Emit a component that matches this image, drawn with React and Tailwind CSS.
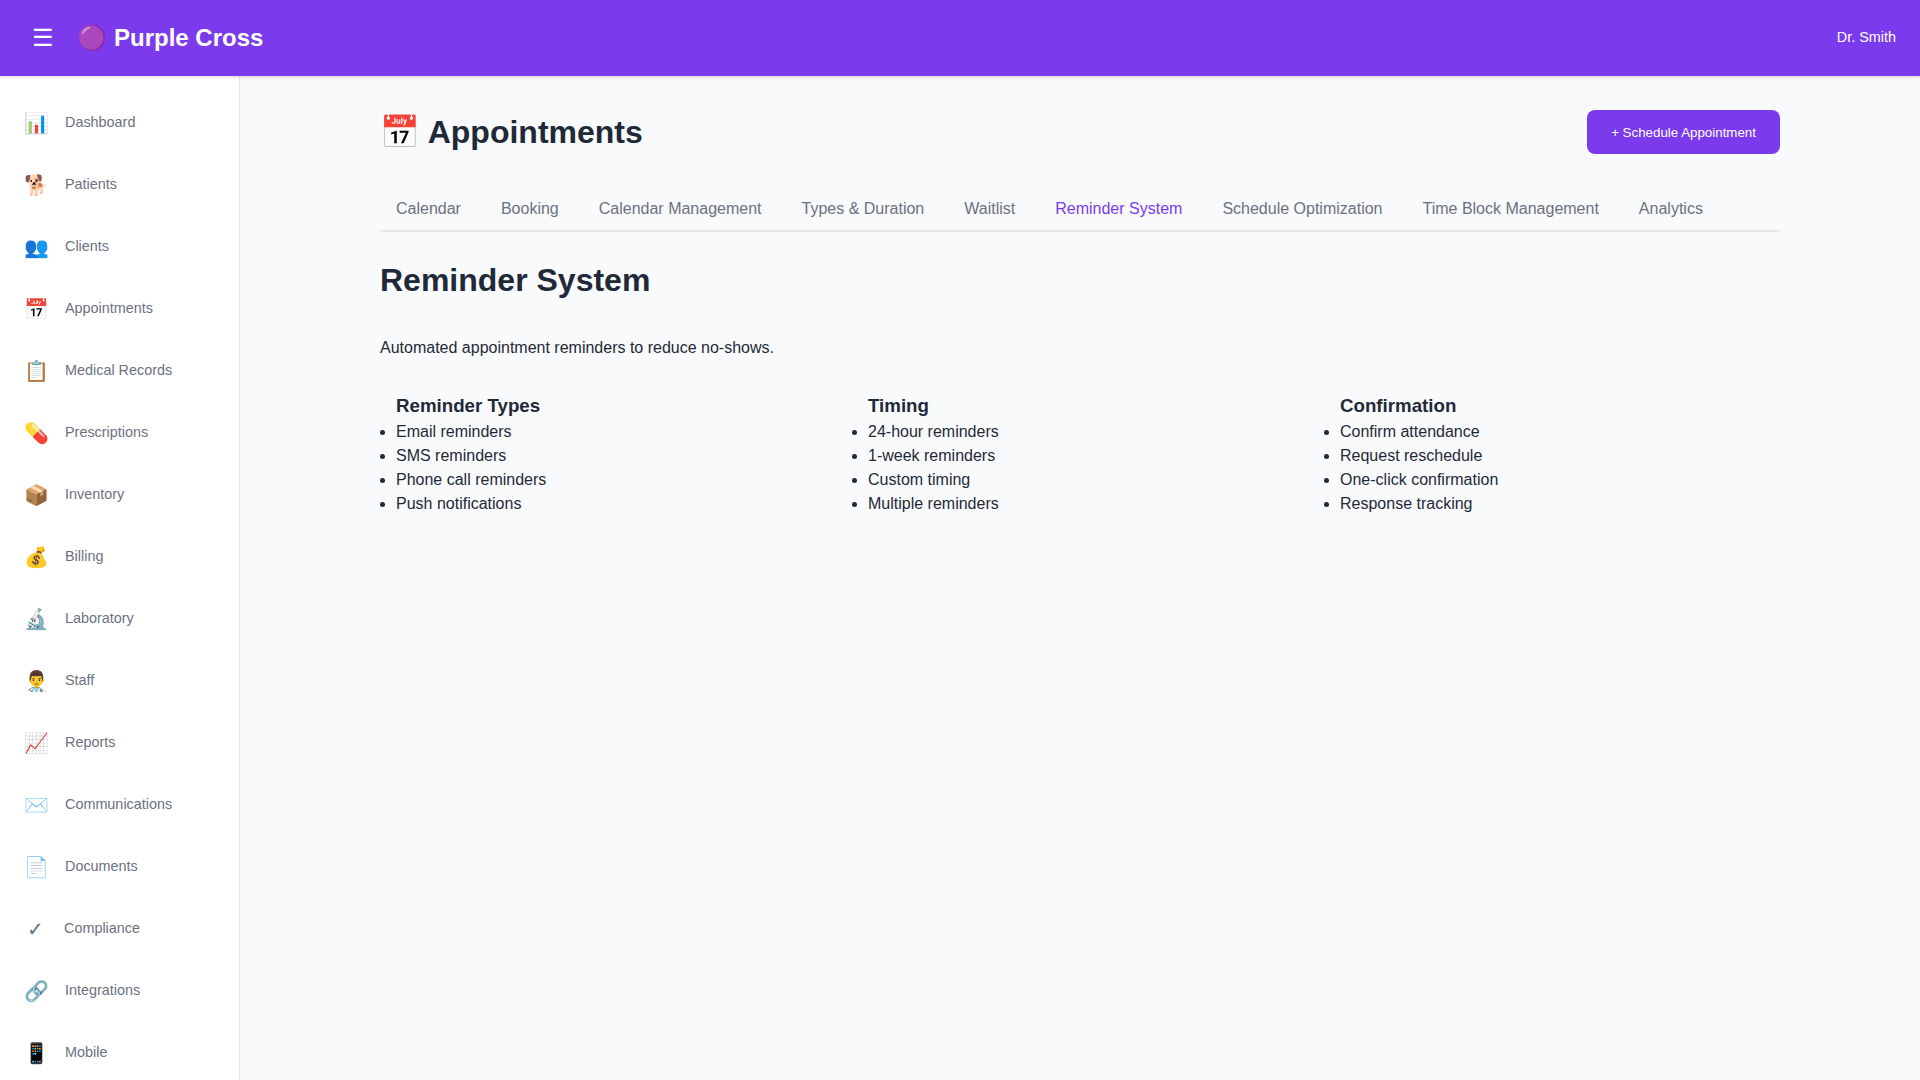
const nav = [
  ['📊', 'Dashboard'], ['🐕', 'Patients'], ['👥', 'Clients'], ['📅', 'Appointments'],
  ['📋', 'Medical Records'], ['💊', 'Prescriptions'], ['📦', 'Inventory'], ['💰', 'Billing'],
  ['🔬', 'Laboratory'], ['👨‍⚕️', 'Staff'], ['📈', 'Reports'], ['✉️', 'Communications'],
  ['📄', 'Documents'], ['✓', 'Compliance'], ['🔗', 'Integrations'], ['📱', 'Mobile'],
];
const tabs = ['Calendar', 'Booking', 'Calendar Management', 'Types & Duration', 'Waitlist', 'Reminder System', 'Schedule Optimization', 'Time Block Management', 'Analytics'];
const columns = [
  ['Reminder Types', ['Email reminders', 'SMS reminders', 'Phone call reminders', 'Push notifications']],
  ['Timing', ['24-hour reminders', '1-week reminders', 'Custom timing', 'Multiple reminders']],
  ['Confirmation', ['Confirm attendance', 'Request reschedule', 'One-click confirmation', 'Response tracking']],
];

export default function App() {
  return (
    <div className="flex h-screen flex-col overflow-hidden bg-[#f9fafb] font-['Liberation_Sans',sans-serif] text-base text-[#1f2937]">
      <header className="z-10 flex h-[76px] shrink-0 items-center justify-between bg-[#7c3aed] px-6 text-white shadow-[0_1px_3px_rgba(0,0,0,0.1),0_1px_2px_rgba(0,0,0,0.06)]">
        <div className="flex items-center gap-[15.3px]">
          <button className="p-2 text-2xl leading-7">☰</button>
          <h1 className="text-2xl font-bold">🟣 Purple Cross</h1>
        </div>
        <span className="pb-0.5 text-[14.4px] leading-[22px]">Dr. Smith</span>
      </header>
      <div className="flex min-h-0 flex-1">
        <aside className="w-60 shrink-0 overflow-hidden border-r border-[#e5e7eb] bg-white py-4">
          <nav>
            {nav.map(([icon, label]) => (
              <a key={label} className="flex h-[62px] items-center gap-4 px-6 text-[#6b7280]">
                <span className={icon === '✓' ? 'min-w-6 pr-px text-center text-xl' : 'min-w-6 text-center text-xl'}>{icon}</span>
                <span className="text-[14.4px]">{label}</span>
              </a>
            ))}
          </nav>
        </aside>
        <main className="flex-1 p-8">
          <div className="mx-auto w-[1400px]">
            <div className="mb-8 flex h-12 items-center justify-between">
              <h1 className="text-[32px] font-bold">📅 Appointments</h1>
              <button className="h-11 rounded-lg bg-[#7c3aed] px-6 pt-px text-[13.333px] text-white">+ Schedule Appointment</button>
            </div>
            <div className="mb-6 flex gap-2 border-b-2 border-[#e5e7eb]">
              {tabs.map((t) => (
                <button key={t} className={t === 'Reminder System' ? 'px-4 py-3 leading-[18px] text-[#7c3aed]' : 'px-4 py-3 leading-[18px] text-[#6b7280]'}>{t}</button>
              ))}
            </div>
            <h2 className="mb-8 text-[32px] font-bold">Reminder System</h2>
            <p>Automated appointment reminders to reduce no-shows.</p>
            <div className="mt-8 grid grid-cols-3 gap-4">
              {columns.map(([title, items]) => (
                <section key={title} className="px-4">
                  <h3 className="text-[18.72px] font-bold">{title}</h3>
                  <ul className="list-disc">{items.map((i) => <li key={i}>{i}</li>)}</ul>
                </section>
              ))}
            </div>
          </div>
        </main>
      </div>
    </div>
  );
}
